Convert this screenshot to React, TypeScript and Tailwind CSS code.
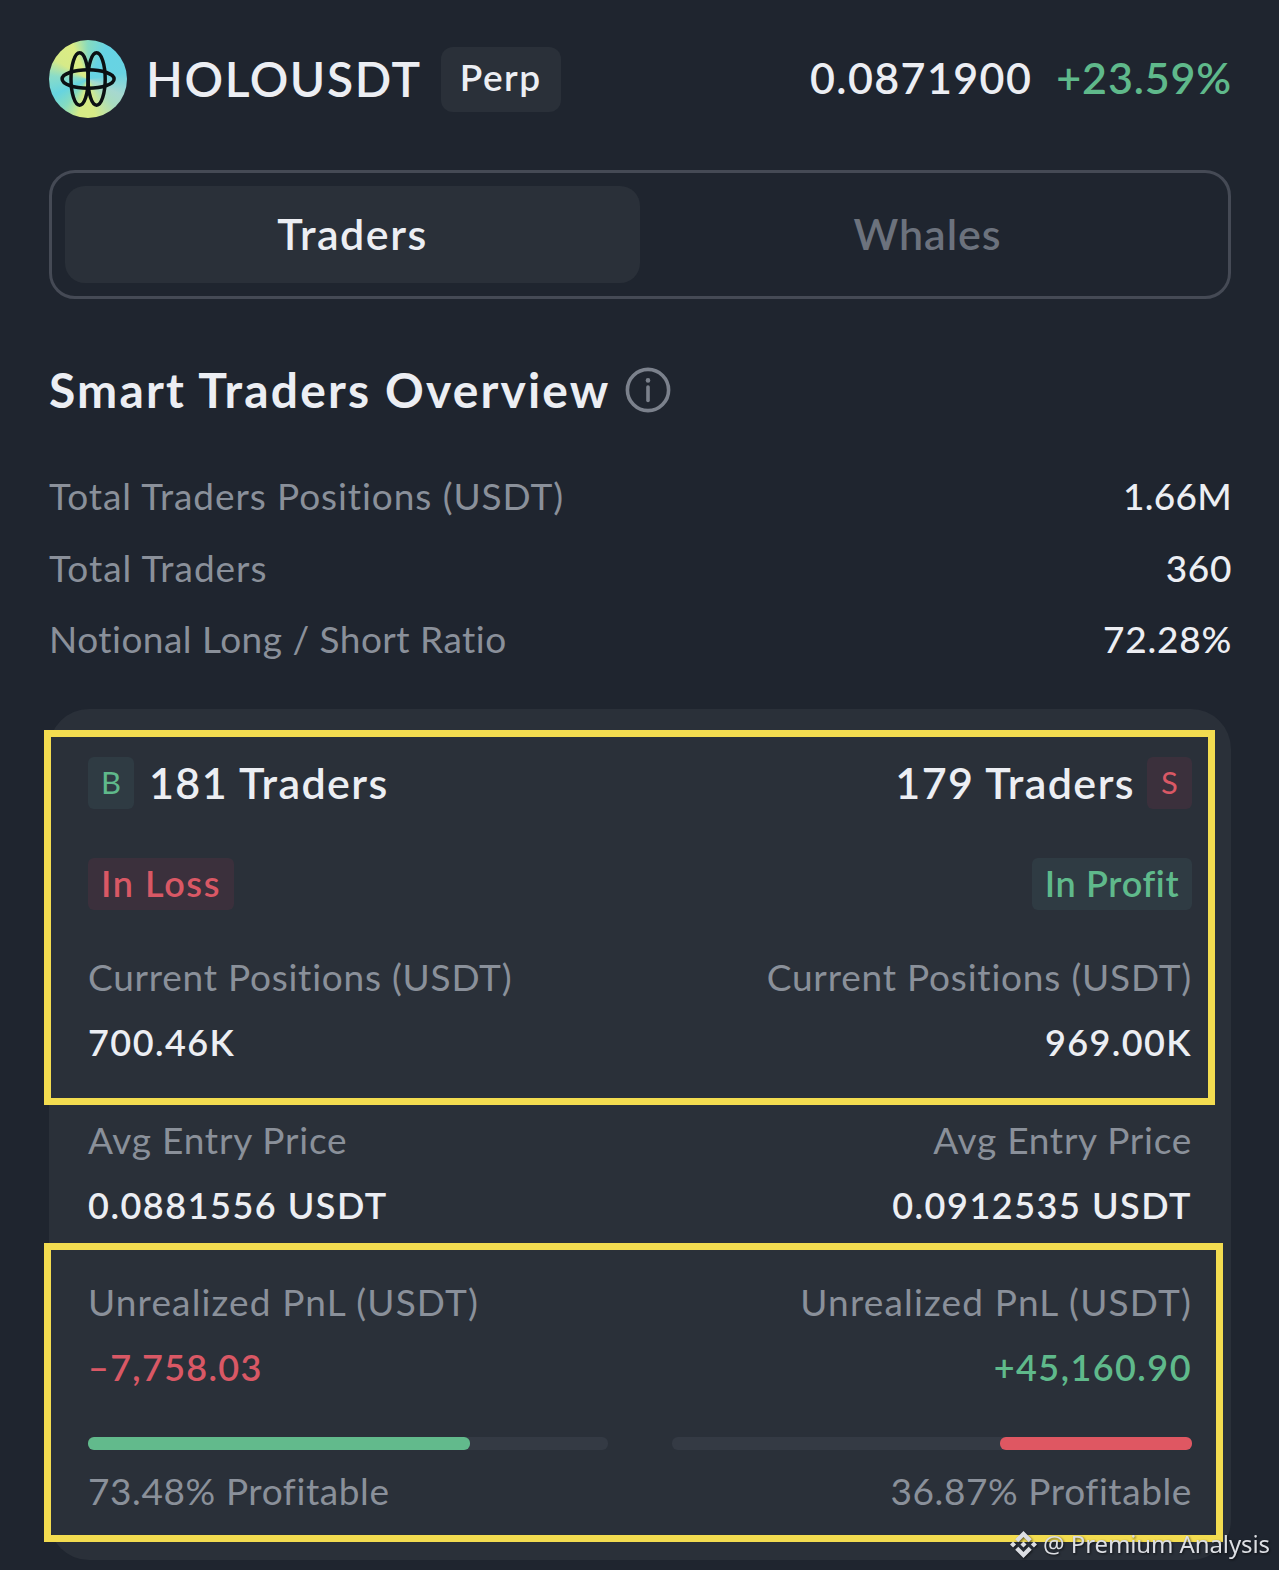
import { SiBinance } from 'react-icons/si';

type Tone = 'up' | 'down';

interface Stat {
    label: string;
    value: string;
    labelClass: string;
    valueClass: string;
}

interface SideProps {
    align: 'left' | 'right';
    badge: string;
    badgeTone: Tone;
    traders: string;
    status: string;
    statusTone: Tone;
    statusClass: string;
    stats: Stat[];
    profitable: number;
}

const toneText: Record<Tone, string> = {
    up: 'text-[#5fb98b]',
    down: 'text-[#d95865]',
};

const toneSoftBg: Record<Tone, string> = {
    up: 'bg-[#2f3b43]',
    down: 'bg-[#3b303c]',
};

const toneBar: Record<Tone, string> = {
    up: 'bg-[#62ba8c]',
    down: 'bg-[#df5762]',
};

const SUMMARY = [
    { label: 'Total Traders Positions (USDT)', value: '1.66M', labelClass: 'tracking-[0.92px]', valueClass: 'tracking-[0.3px]' },
    { label: 'Total Traders', value: '360', labelClass: 'tracking-[0.98px]', valueClass: 'tracking-[0.6px]' },
    { label: 'Notional Long / Short Ratio', value: '72.28%', labelClass: 'tracking-[0.48px]', valueClass: 'tracking-[0.75px]' },
];

const LONG_STATS: Stat[] = [
    { label: 'Current Positions (USDT)', value: '700.46K', labelClass: 'tracking-[0.76px]', valueClass: 'text-[#eceef3] tracking-[1.45px]' },
    { label: 'Avg Entry Price', value: '0.0881556 USDT', labelClass: 'tracking-[0.78px]', valueClass: 'text-[#eceef3] tracking-[1.52px]' },
    { label: 'Unrealized PnL (USDT)', value: '–7,758.03', labelClass: 'tracking-[1.14px]', valueClass: 'text-[#d95865] tracking-[1.3px]' },
];

const SHORT_STATS: Stat[] = [
    { label: 'Current Positions (USDT)', value: '969.00K', labelClass: 'tracking-[0.8px]', valueClass: 'text-[#eceef3] tracking-[1.4px]' },
    { label: 'Avg Entry Price', value: '0.0912535 USDT', labelClass: 'tracking-[0.74px]', valueClass: 'text-[#eceef3] tracking-[1.52px]' },
    { label: 'Unrealized PnL (USDT)', value: '+45,160.90', labelClass: 'tracking-[1.18px]', valueClass: 'text-[#5fb98b] tracking-[1.45px]' },
];

function HoloLogo() {
    return (
        <div className="size-[78px] shrink-0 rounded-full bg-[conic-gradient(#86dbc0_0deg,#66d3e4_30deg,#68d3e2_80deg,#a6d8d0_115deg,#a8dcc0_135deg,#d8eb86_170deg,#d6eb86_195deg,#86dcc0_220deg,#66d4e0_245deg,#8adcc8_275deg,#d6ea88_300deg,#dcec84_335deg,#86dbc0_360deg)]">
            <svg viewBox="0 0 78 78" className="size-full" fill="none" stroke="#0b1013" strokeWidth="3.5">
                <ellipse cx="30.6" cy="39" rx="8.6" ry="26.2" />
                <ellipse cx="47.6" cy="39" rx="8.6" ry="26.2" />
                <ellipse cx="39.1" cy="39" rx="26" ry="9.2" />
            </svg>
        </div>
    );
}

function InfoIcon() {
    return (
        <svg viewBox="0 0 46 46" className="size-[46px] shrink-0" fill="none" stroke="#7b818c" strokeWidth="3.6">
            <circle cx="23" cy="23" r="20.6" />
            <path d="M23 20V33.5" strokeLinecap="round" />
            <circle cx="23" cy="13.4" r="2.3" fill="#7b818c" stroke="none" />
        </svg>
    );
}

function Side({ align, badge, badgeTone, traders, status, statusTone, statusClass, stats, profitable }: SideProps) {
    const right = align === 'right';

    return (
        <div className={`flex w-[520px] flex-col ${right ? 'items-end' : 'items-start'}`}>
            <div className={`flex h-[52px] items-center ${right ? 'flex-row-reverse gap-[12px]' : 'gap-[15px]'}`}>
                <span className={`flex h-[52px] items-center justify-center rounded-md pb-0.5 text-[31px] ${right ? 'w-[45px]' : 'w-[46px]'} ${toneSoftBg[badgeTone]} ${toneText[badgeTone]}`}>
                    {badge}
                </span>
                <span className="pb-0.5 text-[43px] leading-none font-semibold tracking-[1.42px] text-[#eceef3]">{traders}</span>
            </div>

            <div className={`mt-[49px] flex h-[52px] items-center justify-center rounded-md pb-0.5 text-[36px] font-semibold ${statusClass} ${toneSoftBg[statusTone]} ${toneText[statusTone]}`}>
                {status}
            </div>

            <div className={`mt-[45px] flex flex-col gap-[53.5px] ${right ? 'items-end' : 'items-start'}`}>
                {stats.map((s) => (
                    <div key={s.label} className={`flex flex-col gap-[21px] leading-[44px] ${right ? 'items-end' : 'items-start'}`}>
                        <span className={`text-[37px] text-[#8a909a] ${s.labelClass}`}>{s.label}</span>
                        <span className={`text-[36px] font-semibold ${s.valueClass}`}>{s.value}</span>
                    </div>
                ))}
            </div>

            {/* Share of traders in profit */}
            <div className={`mt-12 flex h-[13px] w-full rounded-[6px] bg-[#343a44] ${right ? 'justify-end' : ''}`}>
                <div className={`h-full rounded-[6px] ${toneBar[badgeTone]}`} style={{ width: `${profitable}%` }} />
            </div>
            <span className="mt-[19px] text-[37px] leading-[44px] tracking-[0.6px] text-[#8a909a]">{profitable}% Profitable</span>
        </div>
    );
}

export default function App() {
    return (
        <div className="relative h-[1570px] w-[1279px] overflow-hidden bg-[#1f252f] px-[49px] pt-10 font-['Lato','Open_Sans',sans-serif] text-[#eceef3]">
            <header className="flex h-[78px] items-center">
                <HoloLogo />
                <h1 className="ml-[19px] pb-px text-[48px] leading-none font-semibold tracking-[1.6px]">HOLOUSDT</h1>
                <span className="ml-[19px] flex h-[65px] w-[120px] items-center justify-center rounded-xl bg-[#2a3039] pb-1 text-[37px] font-semibold tracking-[1.5px]">
                    Perp
                </span>
                <div className="mr-[-2px] ml-auto flex gap-[24px] pb-1 text-[43px] leading-none font-semibold">
                    <span className="tracking-[1.4px]">0.0871900</span>
                    <span className="tracking-[0.85px] text-[#5fb98b]">+23.59%</span>
                </div>
            </header>

            <div className="mt-[52px] grid h-[129px] w-[1182px] grid-cols-2 rounded-[26px] border-[3px] border-[#454a55] p-[13px] text-[43px] font-semibold">
                <button className="rounded-[20px] bg-[#2a3039] pb-px tracking-[1.5px]">Traders</button>
                <button className="pb-px tracking-[0.9px] text-[#6c727d]">Whales</button>
            </div>

            <div className="mt-[59px] flex h-[63px] items-center gap-[15px]">
                <h2 className="text-[48px] leading-none font-bold tracking-[2.16px]">Smart Traders Overview</h2>
                <InfoIcon />
            </div>

            <dl className="mt-[39px] w-[1183px]">
                {SUMMARY.map((row) => (
                    <div key={row.label} className="flex h-[71.5px] items-center justify-between text-[37px]">
                        <dt className={`text-[#8a909a] ${row.labelClass}`}>{row.label}</dt>
                        <dd className={`font-medium ${row.valueClass}`}>{row.value}</dd>
                    </div>
                ))}
            </dl>

            <section className="mt-[34.5px] flex h-[851px] w-[1182px] justify-between rounded-[40px] bg-[#2a3039] px-[39px] pt-12">
                <Side
                    align="left"
                    badge="B"
                    badgeTone="up"
                    traders="181 Traders"
                    status="In Loss"
                    statusTone="down"
                    statusClass="w-[146px] tracking-[1.6px]"
                    stats={LONG_STATS}
                    profitable={73.48}
                />
                <Side
                    align="right"
                    badge="S"
                    badgeTone="down"
                    traders="179 Traders"
                    status="In Profit"
                    statusTone="up"
                    statusClass="w-[160px] tracking-[0.65px]"
                    stats={SHORT_STATS}
                    profitable={36.87}
                />
            </section>

            {/* Highlight frames */}
            <div className="pointer-events-none absolute top-[730px] left-[44px] h-[375px] w-[1171px] border-[7px] border-[#f3dc50]" />
            <div className="pointer-events-none absolute top-[1243px] left-[44px] h-[299px] w-[1179px] border-[7px] border-[#f3dc50]" />

            <div className="absolute top-[1528px] right-[9px] flex h-8 items-center gap-[6px] text-[#dcdee3] drop-shadow-[1px_1px_1px_rgba(0,0,0,0.6)]">
                <SiBinance size={27} />
                <span className="font-['Noto_Sans',sans-serif] text-[24px] leading-none tracking-[-0.1px] whitespace-nowrap">@ Premium Analysis</span>
            </div>
        </div>
    );
}
